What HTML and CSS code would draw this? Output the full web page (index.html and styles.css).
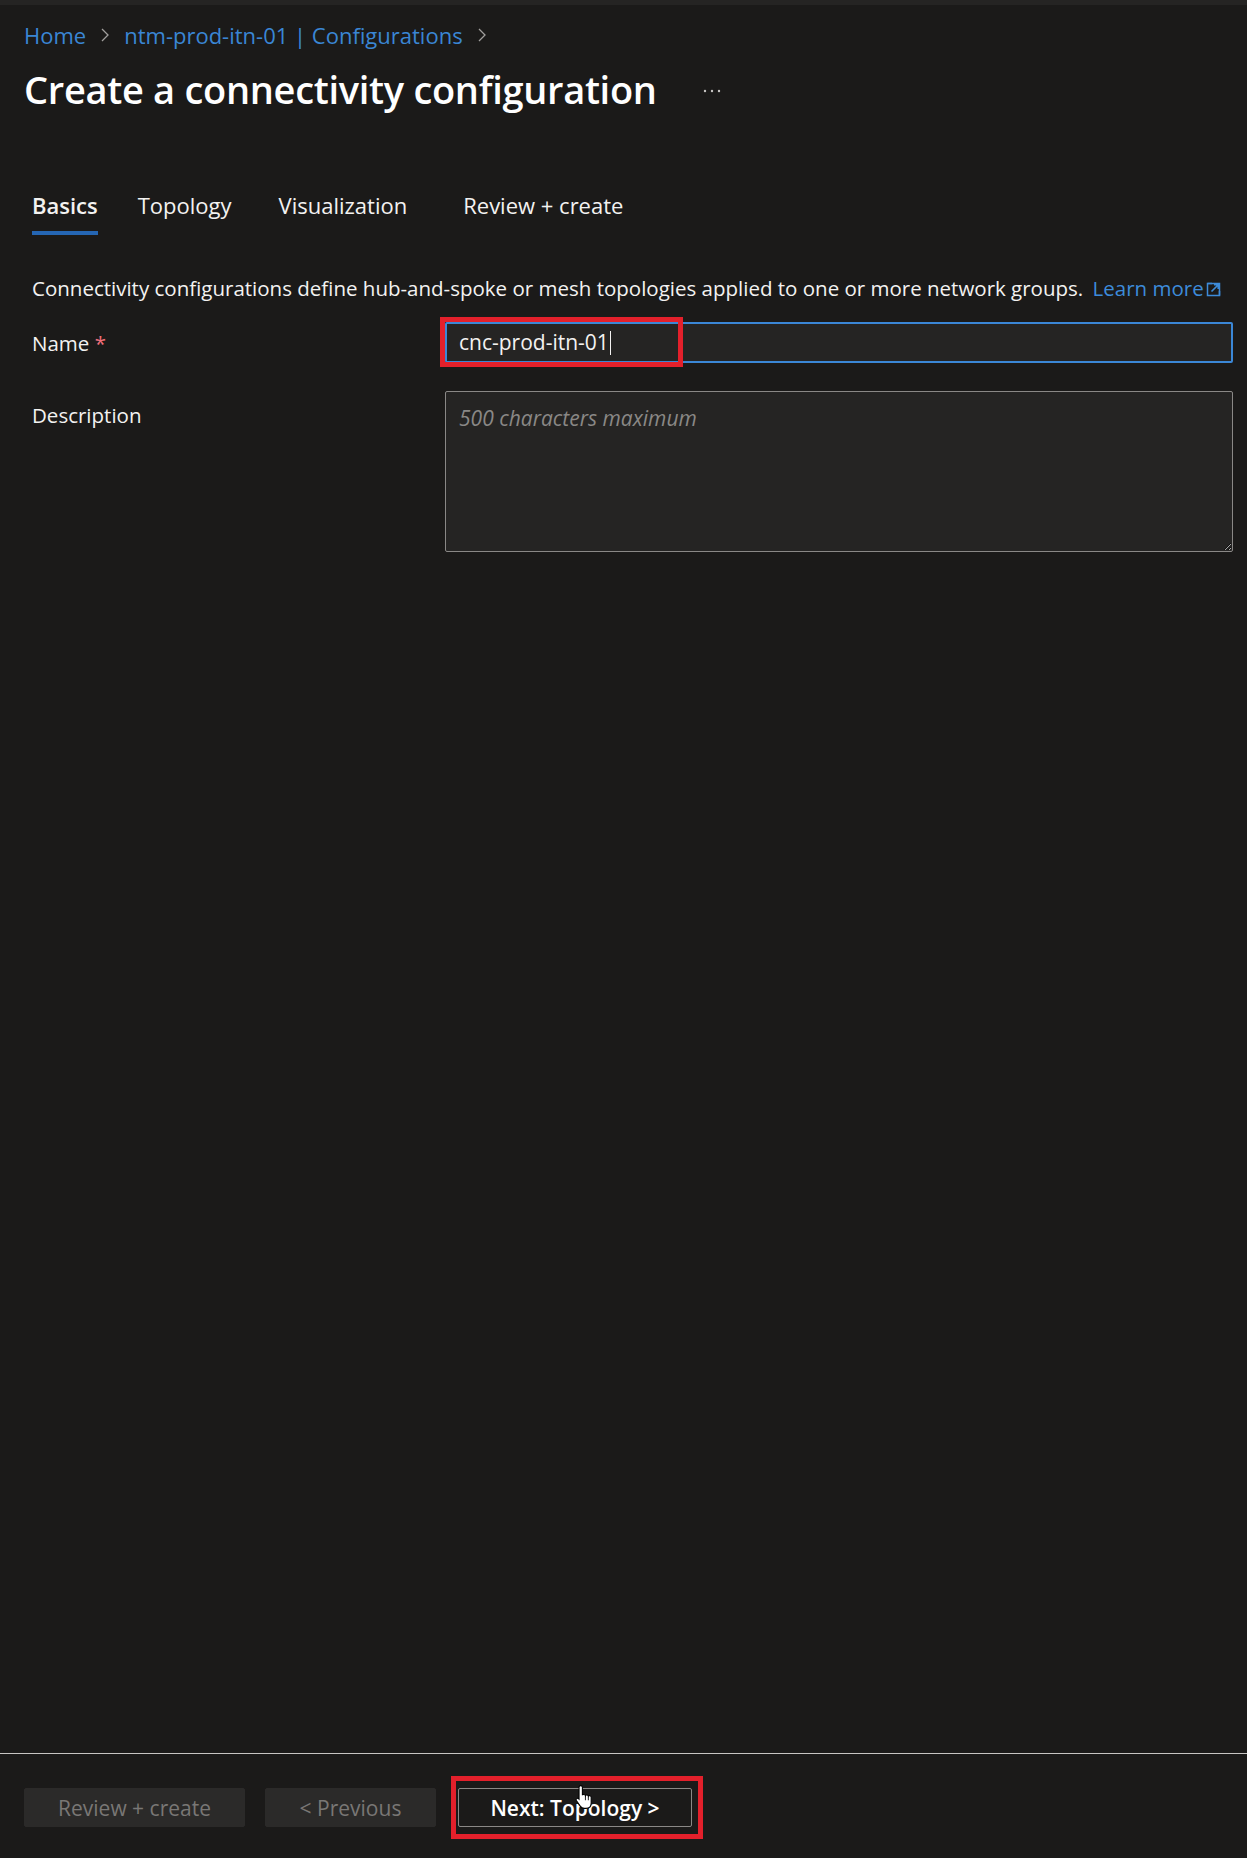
FILE: index.html
```html
<!DOCTYPE HTML>
<html>
<head>
    <title>Create a connectivity configuration</title>
    <link rel="stylesheet" href="styles.css">
</head>
<body>
<div class="top_strip"></div>
<div class="page">
    <header class="page_header">
        <div class="breadcrumb">
            <a href="#">Home</a>
            <svg class="chevron" width="10" height="16" viewBox="0 0 10 16"><polyline points="2,2 8,8 2,14" fill="none" stroke="#a19f9d" stroke-width="1.3"/></svg>
            <a href="#">ntm-prod-itn-01 | Configurations</a>
            <svg class="chevron" width="10" height="16" viewBox="0 0 10 16"><polyline points="2,2 8,8 2,14" fill="none" stroke="#a19f9d" stroke-width="1.3"/></svg>
        </div>
        <div class="title_row">
            <h1>Create a connectivity configuration</h1>
            <svg class="more" width="18" height="4" viewBox="0 0 18 4">
                <circle cx="2" cy="2" r="1.2" fill="#c8c6c4"/>
                <circle cx="9" cy="2" r="1.2" fill="#c8c6c4"/>
                <circle cx="16" cy="2" r="1.2" fill="#c8c6c4"/>
            </svg>
        </div>
    </header>

    <nav class="tabs">
        <a href="#" class="tab tab_active">Basics</a>
        <a href="#" class="tab tab_topology">Topology</a>
        <a href="#" class="tab tab_visual">Visualization</a>
        <a href="#" class="tab tab_review">Review + create</a>
    </nav>

    <section class="form">
        <p class="intro">
            Connectivity configurations define hub-and-spoke or mesh topologies applied to one or more network groups.
            <a href="#" class="link">Learn more<svg class="ext" width="15" height="15" viewBox="0 0 15 15"><path d="M6 1.5H1.5v12h12V9" fill="none" stroke="#3d8bd9" stroke-width="1.5"/><path d="M1.5 1.5h12v12" fill="none" stroke="#3d8bd9" stroke-width="1.5"/><path d="M5.5 9.5L12 3M8 2.8h4.2V7" fill="none" stroke="#3d8bd9" stroke-width="1.6"/></svg></a>
        </p>

        <div class="field_row">
            <label class="field_label" for="config-name">Name <span class="required">*</span></label>
            <div class="field_control">
                <div class="text_input" id="config-name">cnc-prod-itn-01<span class="caret"></span></div>
                <div class="highlight highlight_name"></div>
            </div>
        </div>

        <div class="field_row field_row_top">
            <label class="field_label field_label_top" for="config-desc">Description</label>
            <div class="field_control">
                <textarea id="config-desc" class="text_area" placeholder="500 characters maximum"></textarea>
            </div>
        </div>
    </section>

    <footer class="actions">
        <button class="btn btn_disabled btn_review">Review + create</button>
        <button class="btn btn_disabled btn_prev">&lt; Previous</button>
        <div class="next_wrap">
            <button class="btn btn_next">Next: Topology &gt;</button>
            <div class="highlight highlight_next"></div>
            <svg class="cursor" width="22" height="26" viewBox="0 0 20 24">
                <path d="M6 1.5c1 0 1.6.7 1.6 1.6v7.2c.3-.8 2.6-.8 2.8.4.4-.9 2.5-.8 2.7.5.5-.8 2.5-.6 2.6.9v5.4c0 2.8-1.8 5-4.8 5H9.3c-1.6 0-2.8-.8-3.7-2.1L2 15.2c-.9-1.4 1-2.7 2.2-1.5l.3.3V3.1c0-.9.6-1.6 1.5-1.6z" fill="#fff" stroke="#000" stroke-width="1"/>
                <path d="M10.4 11v4M13.1 11.5v3.5" stroke="#000" stroke-width="0.8"/>
            </svg>
        </div>
    </footer>
</div>
</body>
</html>
```

FILE: styles.css
```css
body {
    margin: 0;
    background-color: #1b1a19;
    color: #f3f2f1;
    font-family: "Open Sans", "Noto Sans", Arial, sans-serif;
}

.top_strip {
    height: 5px;
    background-color: #252423;
}

.page {
    display: flex;
    flex-direction: column;
    min-height: 1853px;
}

.page_header {
    padding: 16px 0 0 24px;
}

.breadcrumb {
    display: flex;
    align-items: center;
    height: 28px;
    font-size: 22px;
    gap: 12px;
}

.breadcrumb a {
    color: #3a86d4;
    text-decoration: none;
}

.chevron {
    margin: 0 2px;
}

.title_row {
    display: flex;
    align-items: center;
    margin-top: 15px;
    height: 50px;
}

h1 {
    margin: 0;
    font-size: 38px;
    font-weight: 600;
    color: #ffffff;
    letter-spacing: -0.3px;
}

.more {
    margin-left: 46px;
    margin-top: 4px;
}

.tabs {
    display: flex;
    margin: 76px 0 0 32px;
}

.tab {
    color: #f3f2f1;
    text-decoration: none;
    font-size: 22px;
    line-height: 30px;
    padding-bottom: 11px;
    border-bottom: 4px solid transparent;
}

.tab_active {
    font-weight: 600;
    border-bottom-color: #2566b3;
}

.tab_topology {
    margin-left: 40px;
}

.tab_visual {
    margin-left: 47px;
}

.tab_review {
    margin-left: 56px;
}

.form {
    padding: 0 14px 0 32px;
}

.intro {
    margin: 39px 0 0 0;
    font-size: 20.5px;
    line-height: 28px;
}

.link {
    color: #3d8bd9;
    text-decoration: none;
    margin-left: 4px;
}

.ext {
    margin-left: 2px;
    vertical-align: -1px;
}

.field_row {
    display: flex;
    align-items: center;
    margin-top: 20px;
}

.field_row_top {
    align-items: flex-start;
    margin-top: 28px;
}

.field_label {
    width: 413px;
    flex-shrink: 0;
    font-size: 20.5px;
    line-height: 28px;
}

.field_label_top {
    padding-top: 10px;
}

.required {
    color: #f1707b;
}

.field_control {
    position: relative;
    flex: 1;
}

.text_input {
    box-sizing: border-box;
    height: 41px;
    border: 2px solid #3b87d6;
    border-radius: 2px;
    background-color: #252423;
    padding: 0 12px;
    font-size: 21px;
    line-height: 37px;
    color: #f3f2f1;
}

.caret {
    display: inline-block;
    width: 1px;
    height: 24px;
    margin-left: 1px;
    background-color: #f3f2f1;
    vertical-align: -5px;
}

.text_area {
    display: block;
    box-sizing: border-box;
    width: 100%;
    height: 161px;
    margin: 0;
    border: 1px solid #8a8886;
    border-radius: 2px;
    background-color: #252423;
    padding: 12px 13px;
    font-family: "Open Sans", "Noto Sans", Arial, sans-serif;
    font-size: 21px;
    color: #f3f2f1;
}

.text_area::placeholder {
    color: #8a8886;
    font-style: italic;
}

.highlight {
    position: absolute;
    border: 5px solid #e3202b;
    pointer-events: none;
}

.highlight_name {
    left: -5px;
    top: -5px;
    width: 233px;
    height: 40px;
}

.actions {
    margin-top: auto;
    height: 105px;
    box-sizing: border-box;
    border-top: 1px solid #c8c6c4;
    display: flex;
    align-items: flex-start;
    padding: 34px 0 0 24px;
    gap: 20px;
}

.btn {
    height: 39px;
    box-sizing: border-box;
    border-radius: 2px;
    font-family: "Open Sans", "Noto Sans", Arial, sans-serif;
    font-size: 21px;
    padding: 0;
}

.btn_disabled {
    background-color: #2b2a29;
    border: 1px solid #2b2a29;
    color: #797775;
}

.btn_review {
    width: 221px;
}

.btn_prev {
    width: 171px;
}

.next_wrap {
    position: relative;
    margin-left: 2px;
}

.btn_next {
    width: 234px;
    background-color: #1b1a19;
    border: 1px solid #8a8886;
    color: #ffffff;
    font-weight: 600;
}

.highlight_next {
    left: -7px;
    top: -12px;
    width: 242px;
    height: 53px;
}

.cursor {
    position: absolute;
    left: 116px;
    top: -4px;
}
```
